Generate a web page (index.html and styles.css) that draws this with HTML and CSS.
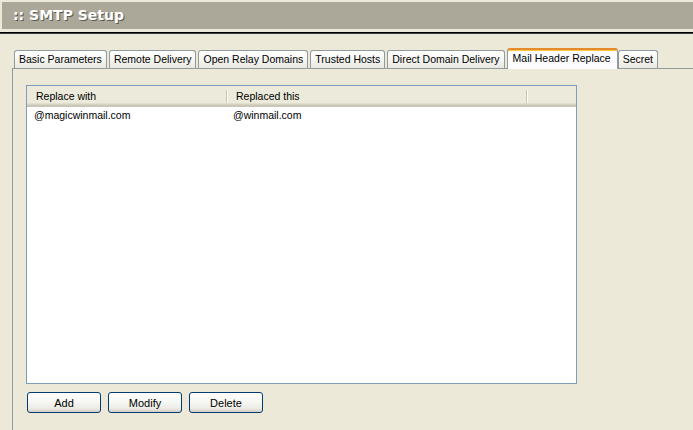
FILE: index.html
```html
<!DOCTYPE html>
<html>
<head>
<meta charset="utf-8">
<title>SMTP Setup</title>
<link rel="stylesheet" href="styles.css">
</head>
<body>
<div class="titlebar">:: SMTP Setup</div>
<div class="rule"></div>
<div class="tabs">
  <div class="tab">Basic Parameters</div>
  <div class="tab">Remote Delivery</div>
  <div class="tab">Open Relay Domains</div>
  <div class="tab">Trusted Hosts</div>
  <div class="tab">Direct Domain Delivery</div>
  <div class="tab active">Mail Header Replace</div>
  <div class="tab last">Secret</div>
</div>
<div class="panel">
  <div class="list">
    <div class="list-head">
      <div class="hcell c1">Replace with</div>
      <div class="hcell c2">Replaced this</div>
      <div class="hcell c3"></div>
    </div>
    <div class="row">
      <div class="cell c1">@magicwinmail.com</div>
      <div class="cell c2">@winmail.com</div>
    </div>
  </div>
  <div class="buttons">
    <button class="btn">Add</button>
    <button class="btn">Modify</button>
    <button class="btn">Delete</button>
  </div>
</div>
</body>
</html>
```
FILE: styles.css
```css
html, body {
  margin: 0;
  padding: 0;
  background: #ece9d8;
  overflow: hidden;
  height: 430px;
}
body {
  font-family: "Liberation Sans", Arial, sans-serif;
  font-size: 10.5px;
  color: #000;
}
.titlebar {
  margin: 2px 0 0 2px;
  height: 27px;
  line-height: 26px;
  background: #aca899;
  padding-left: 11px;
  color: #fff;
  font-family: "DejaVu Sans", Verdana, sans-serif;
  font-weight: bold;
  font-size: 14px;
  text-shadow: 1px 1px 0 #5a5a50;
}
.rule {
  margin-top: 3px;
  height: 1px;
  background: #000;
  border-bottom: 1px solid #3c3c3c;
}
.tabs {
  display: flex;
  align-items: flex-end;
  gap: 2px;
  margin-top: 14px;
  padding-left: 14px;
  height: 20px;
  position: relative;
  z-index: 2;
}
.tab {
  height: 17px;
  line-height: 17px;
  padding: 0 4px;
  border: 1px solid #919b9c;
  border-bottom: none;
  border-radius: 3px 3px 0 0;
  background: linear-gradient(#ffffff, #f3f3ef 60%, #e8e7e0);
  white-space: nowrap;
  box-sizing: content-box;
}
.tab.active {
  height: 19px;
  line-height: 17px;
  border-top: 2px solid #e68b2c;
  box-shadow: inset 0 1px 0 #ffc83c;
  background: #fcfcfe;
  margin-bottom: -1px;
  padding: 0 6px 0 5px;
}
.tab.last {
  margin-left: -2px;
}
.panel {
  margin-left: 12px;
  border-top: 1px solid #919b9c;
  border-left: 1px solid #919b9c;
  padding: 16px 0 0 13px;
  height: 362px;
  box-sizing: border-box;
}
.list {
  width: 549px;
  height: 297px;
  border: 1px solid #7f9db9;
  background: #fff;
}
.list-head {
  display: flex;
  height: 21px;
  background: linear-gradient(#ebeadb 0, #ebeadb 17px, #e2dece 17px, #e2dece 18px, #d6d2c2 18px, #d6d2c2 19px, #cbc7b8 19px, #cbc7b8 21px);
}
.hcell {
  line-height: 20px;
  padding-left: 9px;
  box-sizing: border-box;
  position: relative;
}
.hcell.c1 { width: 200px; }
.hcell.c2 { width: 300px; }
.hcell.c3 { flex: 1; }
.hcell.c1::after,
.hcell.c2::after {
  content: "";
  position: absolute;
  right: 0;
  top: 4px;
  height: 13px;
  width: 1px;
  background: #c7c5b2;
  box-shadow: 1px 0 0 #fff;
}
.row {
  display: flex;
  height: 16px;
  line-height: 16px;
}
.cell {
  box-sizing: border-box;
  padding-left: 7px;
}
.cell.c1 { width: 200px; }
.cell.c2 { width: 300px; padding-left: 6px; }
.buttons {
  display: flex;
  gap: 7px;
  margin-top: 8px;
  padding-left: 1px;
}
.btn {
  width: 74px;
  height: 21px;
  margin: 0;
  padding: 0;
  border: 1px solid #003c74;
  border-radius: 3px;
  background: linear-gradient(#ffffff, #f6f6f2 50%, #ecebe5 80%, #d6d0c5);
  font-family: "Liberation Sans", Arial, sans-serif;
  font-size: 11px;
  color: #000;
}
```
